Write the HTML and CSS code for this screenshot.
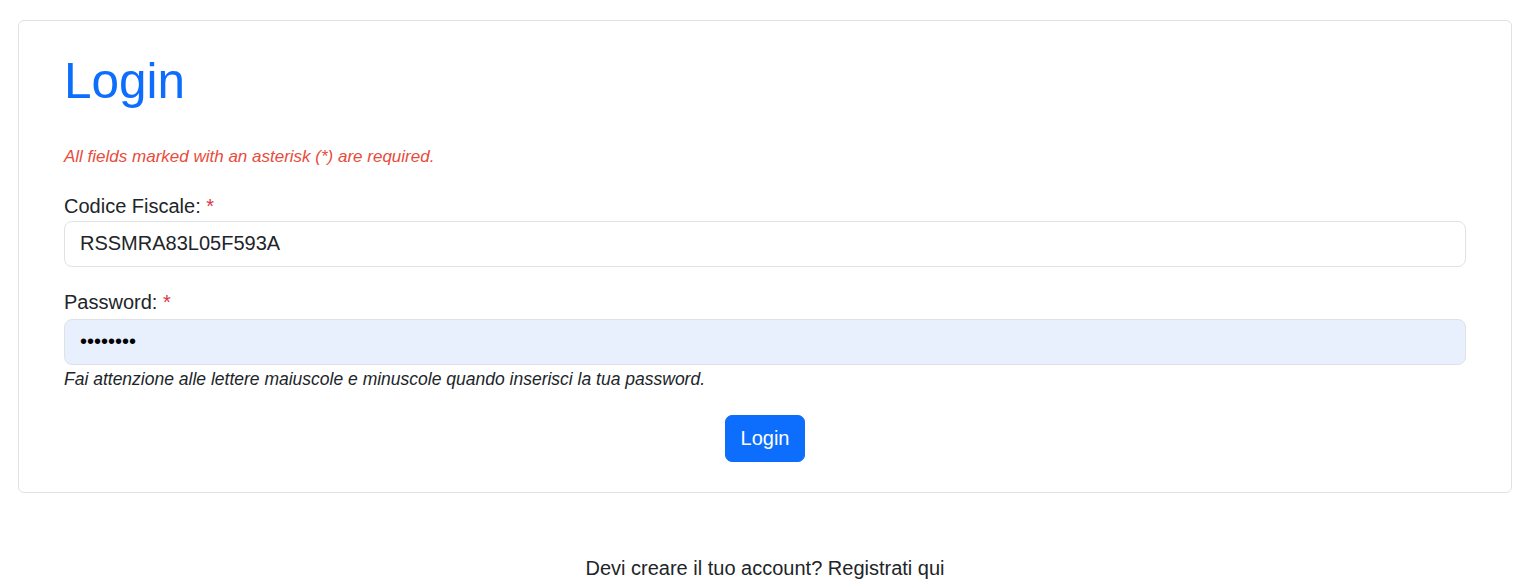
FILE: index.html
```html
<!DOCTYPE html>
<html lang="it">
<head>
<meta charset="utf-8">
<title>Login</title>
<link rel="stylesheet" href="styles.css">
</head>
<body>
<main class="page">
  <section class="card">
    <h1 class="title">Login</h1>
    <p class="required-note">All fields marked with an asterisk (*) are required.</p>
    <form class="form">
      <div class="field">
        <label class="label" for="cf">Codice Fiscale: <span class="star">*</span></label>
        <input class="input" id="cf" type="text" value="RSSMRA83L05F593A">
      </div>
      <div class="field field-last">
        <label class="label" for="pw">Password: <span class="star">*</span></label>
        <input class="input input-filled" id="pw" type="password" value="password">
        <div class="hint">Fai attenzione alle lettere maiuscole e minuscole quando inserisci la tua password.</div>
      </div>
      <div class="actions">
        <button class="btn" type="button">Login</button>
      </div>
    </form>
  </section>
  <p class="footer-text">Devi creare il tuo account? Registrati qui</p>
</main>
</body>
</html>
```

FILE: styles.css
```css
* { box-sizing: border-box; }
html, body { margin: 0; padding: 0; background: #fff; }
body {
  font-family: "Liberation Sans", Arial, sans-serif;
  font-size: 20px;
  line-height: 1.5;
  color: #212529;
}
.page {
  padding: 20px 20px 0 18px;
}
.card {
  border: 1px solid #dee2e6;
  border-radius: 6px;
  padding: 31px 45px 30px 45px;
  background: #fff;
}
.title {
  margin: 0;
  font-size: 49.5px;
  font-weight: 400;
  line-height: 58px;
  color: #0d6efd;
}
.required-note {
  margin: 34px 0 0 0;
  font-size: 17px;
  font-style: italic;
  color: #e74c3c;
  line-height: 25.5px;
}
.form { margin-top: 21px; }
.field { margin-bottom: 20px; }
.field-last { margin-bottom: 0; }
.label {
  display: block;
  font-size: 20px;
  line-height: 30px;
}
.star { color: #dc3545; }
.input {
  display: block;
  width: 100%;
  height: 46px;
  padding: 0 15px;
  font-family: "Liberation Sans", Arial, sans-serif;
  font-size: 20px;
  color: #212529;
  background: #fff;
  border: 1px solid #dee2e6;
  border-radius: 8px;
  outline: none;
}
.input-filled {
  background: #e8f0fe;
  color: #000;
  margin-top: 2px;
}
.hint {
  margin-top: 1px;
  font-size: 17.5px;
  font-style: italic;
  line-height: 26px;
  color: #212529;
}
.actions {
  display: flex;
  justify-content: center;
  margin-top: 23px;
}
.btn {
  font-family: "Liberation Sans", Arial, sans-serif;
  font-size: 20px;
  line-height: 30px;
  padding: 7.5px 14.5px;
  color: #fff;
  background: #0d6efd;
  border: 1px solid #0d6efd;
  border-radius: 7px;
  cursor: pointer;
}
.footer-text {
  margin: 60px 0 0 0;
  text-align: center;
  line-height: 30px;
}
```
